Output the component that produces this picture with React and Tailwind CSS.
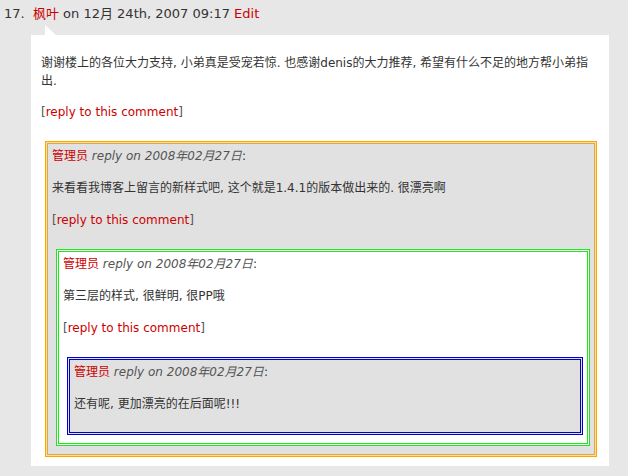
import React from 'react';

const FONT = "font-['DejaVu_Sans','Noto_Sans_CJK_SC',sans-serif]";

const ReplyLink = ({ className = '' }) => (
    <p className={`text-[#555] ${className}`}>
        [<a href="#" className="text-[#cc0000]">reply to this comment</a>]
    </p>
);

const ReplyHeader = () => (
    <p>
        <a href="#" className="text-[#cc0000]">管理员</a>{' '}
        <span className="italic text-[#555]">reply on 2008年02月27日</span>:
    </p>
);

const Reply = ({ border, bg, text, children, last }) => (
    <div className={`border-[3px] border-double ${border} ${bg} pl-[4px] pr-[4px] pt-[3px] ${last ? 'pb-[19px]' : 'pb-[8px]'}`}>
        <ReplyHeader />
        <p className="mt-[14px]">{text}</p>
        {!last && <ReplyLink className="mt-[14px]" />}
        {children && <div className="ml-[4px] mt-[20px]">{children}</div>}
    </div>
);

export default function App() {
    return (
        <div className={`min-h-[476px] bg-[#e7e7e7] ${FONT} text-[12px] leading-[18px] text-[#333]`}>
            <div className="pl-[4px] pt-[5px] text-[13px]">
                17.&nbsp; <a href="#" className="text-[#cc0000]">枫叶</a> on 12月 24th, 2007 09:17{' '}
                <a href="#" className="text-[#cc0000]">Edit</a>
            </div>

            <div className="relative ml-[31px] mt-[12px] w-[578px] bg-white px-[10px] pt-[19px] pb-[9px]">
                <div className="absolute -top-[10px] left-[14px] h-0 w-0 border-b-[10px] border-r-[11px] border-b-white border-r-transparent" />

                <p>谢谢楼上的各位大力支持, 小弟真是受宠若惊. 也感谢denis的大力推荐, 希望有什么不足的地方帮小弟指出.</p>
                <ReplyLink className="mt-[13px]" />

                <div className="ml-[4px] mr-[2px] mt-[20px]">
                    <Reply
                        border="border-[#ffa500]"
                        bg="bg-[#e1e1e1]"
                        text="来看看我博客上留言的新样式吧, 这个就是1.4.1的版本做出来的. 很漂亮啊"
                    >
                        <Reply
                            border="border-[#22e622]"
                            bg="bg-white"
                            text="第三层的样式, 很鲜明, 很PP哦"
                        >
                            <Reply
                                border="border-[#0000cc]"
                                bg="bg-[#e1e1e1]"
                                text="还有呢, 更加漂亮的在后面呢!!!"
                                last
                            />
                        </Reply>
                    </Reply>
                </div>
            </div>
        </div>
    );
}
